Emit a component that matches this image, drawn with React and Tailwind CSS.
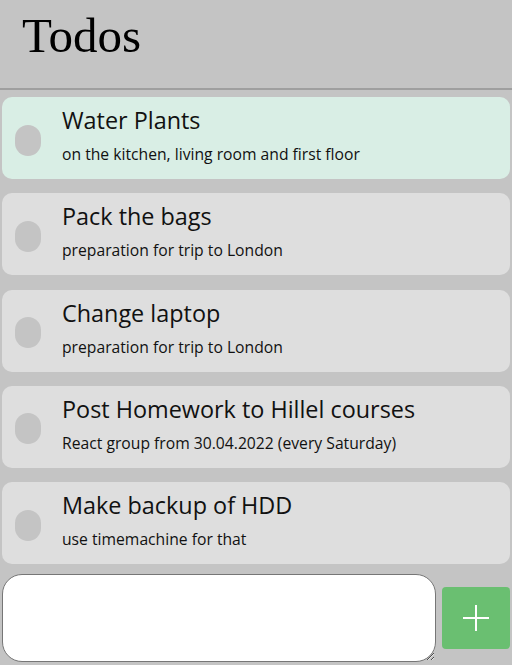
import React, { useState } from 'react';

const initialTodos = [
    { id: 1, title: 'Water Plants', description: 'on the kitchen, living room and first floor', active: true },
    { id: 2, title: 'Pack the bags', description: 'preparation for trip to London' },
    { id: 3, title: 'Change laptop', description: 'preparation for trip to London' },
    { id: 4, title: 'Post Homework to Hillel courses', description: 'React group from 30.04.2022 (every Saturday)' },
    { id: 5, title: 'Make backup of HDD', description: 'use timemachine for that' },
];

const TodoItem = ({ todo }) => (
    <div className={`flex items-center h-[82px] rounded-[10px] px-[13px] ${todo.active ? 'bg-[#d9eee5]' : 'bg-[#dedede]'}`}>
        <div className="w-[26px] h-[31px] rounded-full bg-[#c4c4c4] shrink-0 mt-[4px]"></div>
        <div className="ml-[21px] mb-[6px] text-[#111]">
            <div className="text-[23.4px] leading-[30px]">{todo.title}</div>
            <div className="text-[15.7px] leading-[22px] mt-[8px]">{todo.description}</div>
        </div>
    </div>
);

export default function App() {
    const [todos] = useState(initialTodos);
    const [text, setText] = useState('');

    return (
        <div className="min-h-[665px] bg-[#c4c4c4] font-['Open_Sans',sans-serif]">
            <header className="h-[90px] border-b-2 border-[#9f9f9f] px-[22px] pt-[6px]">
                <h1 className="font-['Liberation_Serif',serif] text-[49px] leading-[60px] text-black">Todos</h1>
            </header>
            <div className="flex flex-col gap-[14.3px] px-[2px] pt-[7px]">
                {todos.map(todo => <TodoItem key={todo.id} todo={todo} />)}
            </div>
            <div className="flex items-center gap-[6px] px-[2px] mt-[10px]">
                <textarea
                    value={text}
                    onChange={e => setText(e.target.value)}
                    className="w-[434px] h-[88px] bg-white border border-[#767676] rounded-[20px] resize-y outline-none"
                ></textarea>
                <button className="w-[68px] h-[62px] bg-[#6abf71] rounded-[4px] flex items-center justify-center">
                    <svg width="28" height="28" viewBox="0 0 28 28" stroke="white" strokeWidth="2">
                        <path d="M14 1v26M1 14h26" />
                    </svg>
                </button>
            </div>
        </div>
    );
}
